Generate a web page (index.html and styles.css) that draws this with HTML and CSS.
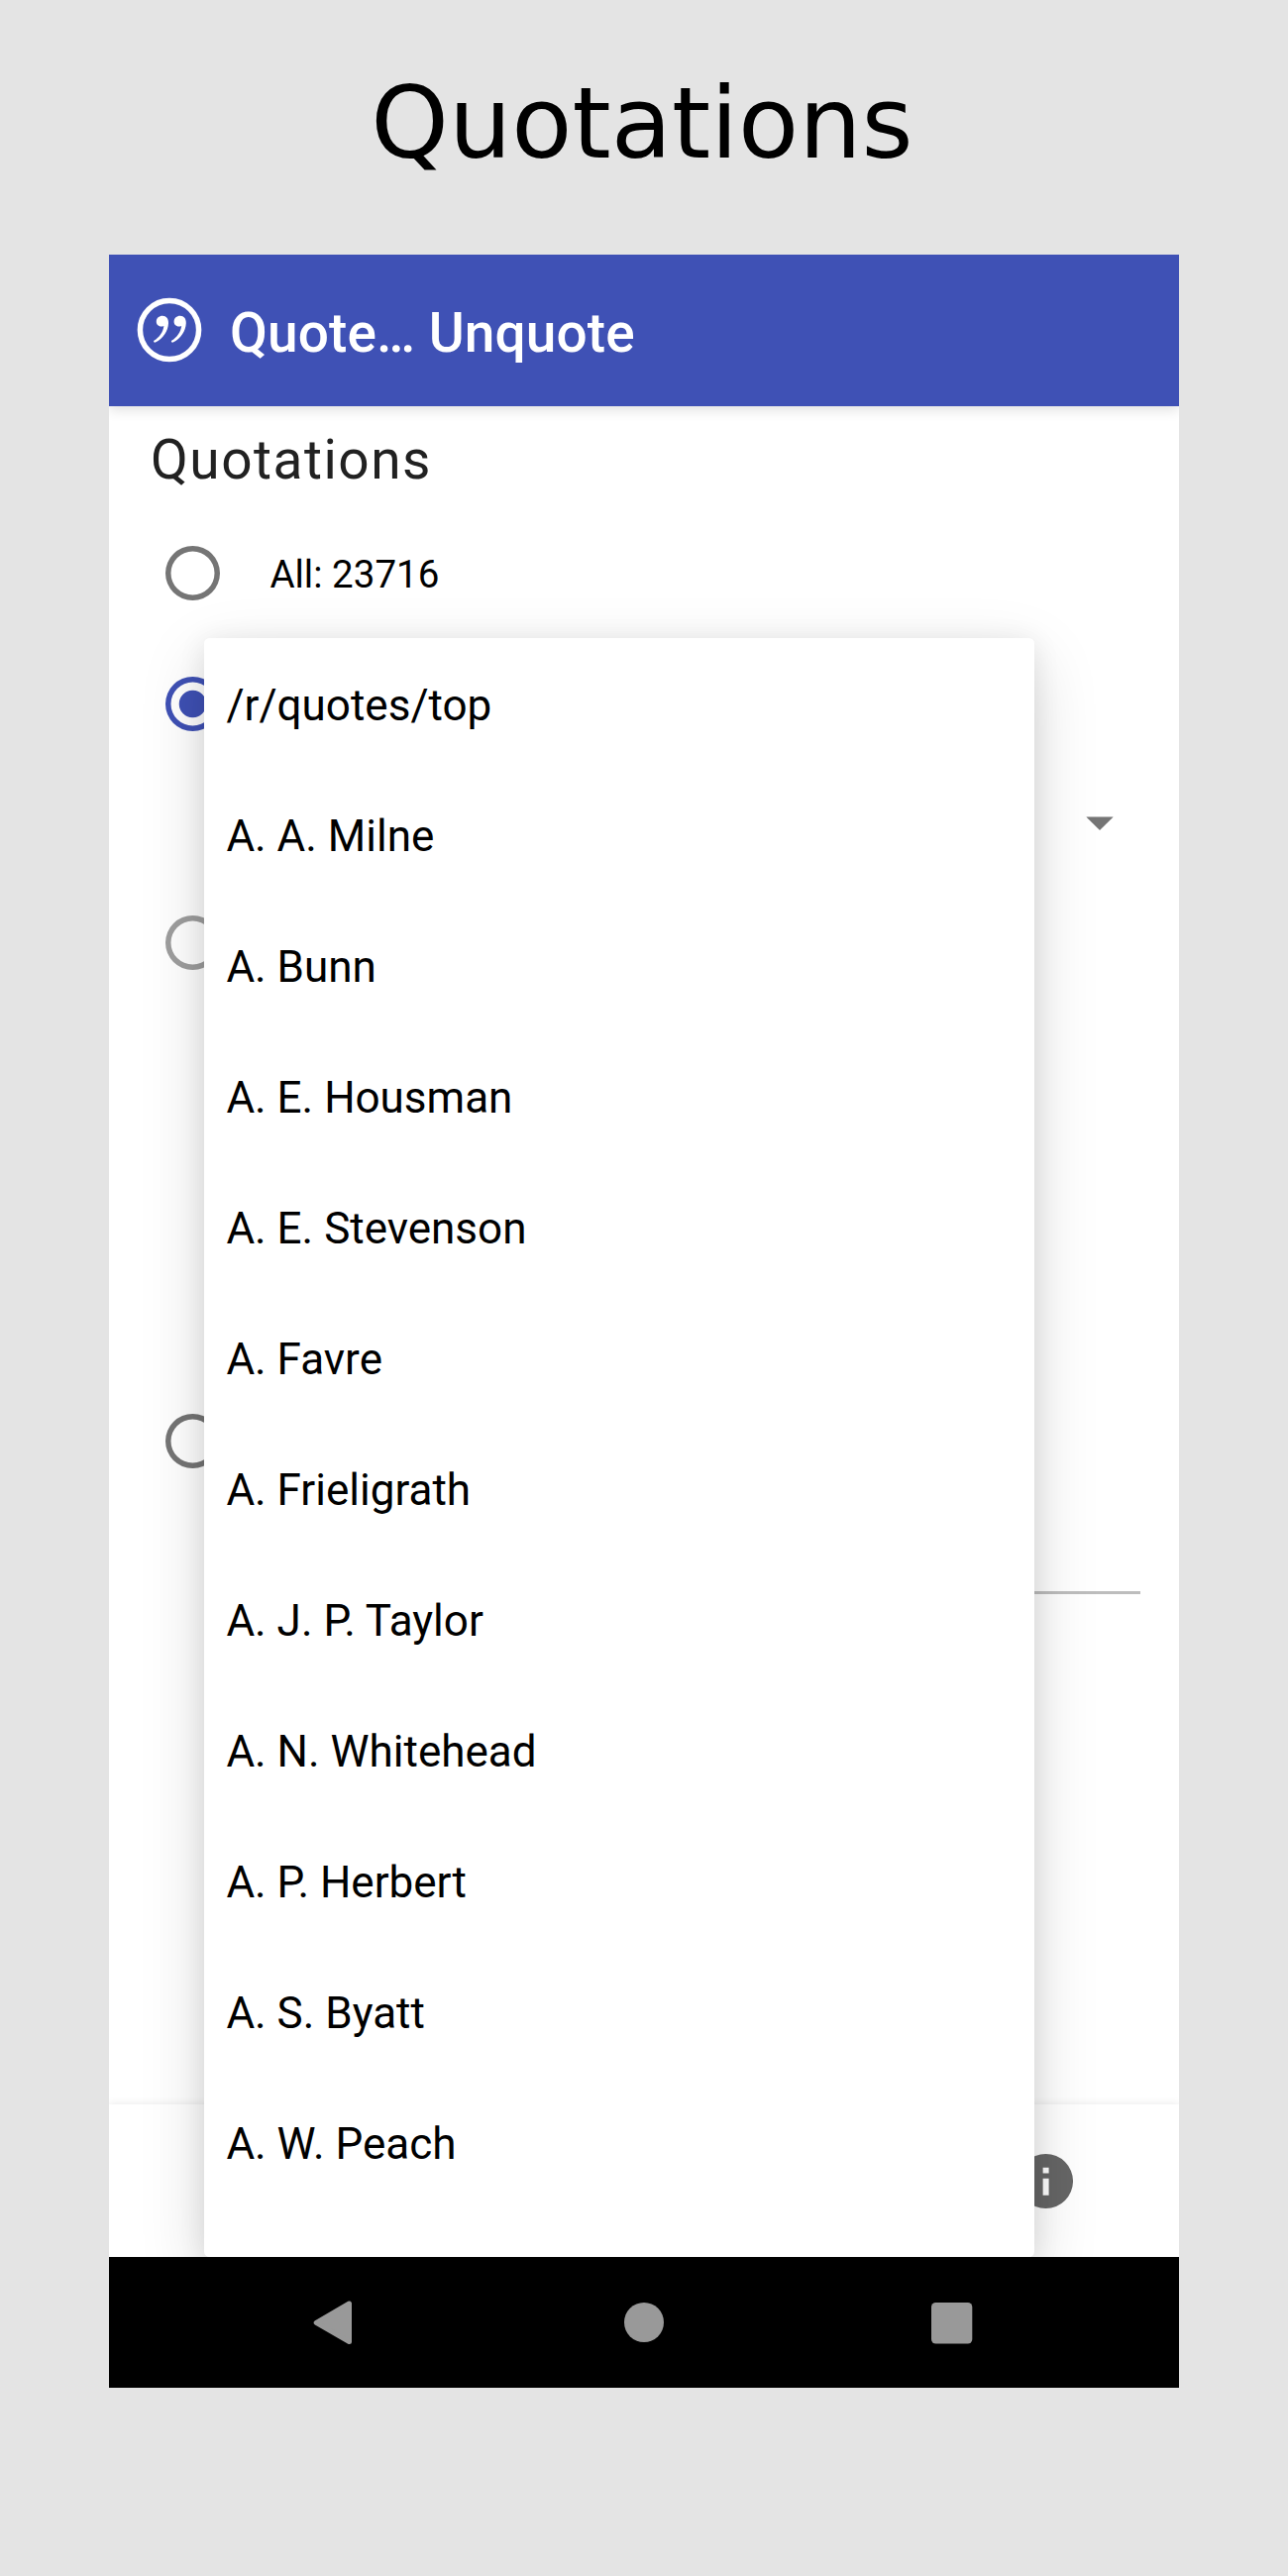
FILE: index.html
```html
<!DOCTYPE html>
<html lang="en">
<head>
<meta charset="utf-8">
<title>Quotations</title>
<link rel="stylesheet" href="styles.css">
</head>
<body>
<h1 class="page-title">Quotations</h1>
<div class="phone">
  <header class="app-bar">
    <svg class="app-logo" width="66" height="67" viewBox="0 0 66 67">
      <circle cx="33" cy="33" r="29.6" fill="none" stroke="#fff" stroke-width="5.5"/>
      <g fill="#fff">
        <path id="tick" d="M26 18.7C29.8 18.7 32.2 21.6 32 26.2C31.6 34.2 26.9 41.2 18.9 45.6C17.8 46.1 16.4 44.9 17.4 43.8C23.2 39.9 26.5 35.2 27.4 28.9C22.9 30.7 19.5 27.7 19.8 24.2C20 21 22.6 18.7 26 18.7Z"/>
        <use href="#tick" x="17.8"/>
      </g>
    </svg>
    <span class="app-name">Quote… Unquote</span>
  </header>
  <main class="content">
    <h2 class="heading">Quotations</h2>
    <div class="option"><span class="radio"></span><span class="label">All: 23716</span></div>
    <div class="option"><span class="radio checked"></span></div>
    <div class="spinner"><svg width="28" height="14" viewBox="0 0 28 14"><path d="M.3 .4H27.7L14 14Z" fill="#757575"/></svg></div>
    <div class="option"><span class="radio disabled"></span></div>
    <div class="gap"></div>
    <div class="option"><span class="radio"></span></div>
    <div class="field"></div>
    <footer class="bottom-bar">
      <svg width="55" height="55" viewBox="0 0 55 55"><path fill="#666" fill-rule="evenodd" d="M27.5 0a27.5 27.5 0 1 0 0 55a27.5 27.5 0 1 0 0-55ZM24.6 13.8h6v5.8h-6ZM24.6 24.8h6v17h-6Z"/></svg>
    </footer>
    <ul class="menu">
      <li>/r/quotes/top</li>
      <li>A. A. Milne</li>
      <li>A. Bunn</li>
      <li>A. E. Housman</li>
      <li>A. E. Stevenson</li>
      <li>A. Favre</li>
      <li>A. Frieligrath</li>
      <li>A. J. P. Taylor</li>
      <li>A. N. Whitehead</li>
      <li>A. P. Herbert</li>
      <li>A. S. Byatt</li>
      <li>A. W. Peach</li>
    </ul>
  </main>
  <nav class="nav-bar">
    <svg width="44" height="46" viewBox="0 0 44 46"><path d="M3.2 23.3L36.5 4V42.6Z" fill="#999" stroke="#999" stroke-width="5" stroke-linejoin="round"/></svg>
    <svg width="40" height="40" viewBox="0 0 40 40"><circle cx="20" cy="20" r="20" fill="#999"/></svg>
    <svg width="42" height="44" viewBox="0 0 42 44"><rect y="2" width="41.3" height="41.5" rx="4.5" fill="#999"/></svg>
  </nav>
</div>
</body>
</html>
```
FILE: styles.css
```css
* { box-sizing: border-box; }
body {
  margin: 0;
  height: 2600px;
  background: #e4e4e4;
  font-family: Roboto, sans-serif;
  color: #000;
}
.page-title {
  margin: 0;
  height: 257px;
  padding: 65px 4px 0 0;
  font: 400 100px/120px "DejaVu Sans", sans-serif;
  text-align: center;
}
.phone {
  width: 1080px;
  height: 2153px;
  margin: 0 auto;
  display: flex;
  flex-direction: column;
  background: #fff;
}
.app-bar {
  height: 153px;
  flex: none;
  display: flex;
  align-items: center;
  gap: 28px;
  padding-left: 28px;
  background: #3f51b5;
  color: #fff;
  z-index: 1;
  box-shadow: 0 4px 12px rgba(0, 0, 0, .12);
  clip-path: inset(0 0 -30px 0);
}
.app-name {
  font-size: 55px;
  font-weight: 500;
  line-height: 64px;
  letter-spacing: .1px;
  padding-top: 5px;
}
.content {
  position: relative;
  flex: 1;
  overflow: hidden;
  display: flex;
  flex-direction: column;
}
.heading {
  margin: 0;
  height: 102px;
  padding: 22px 0 0 42px;
  font-size: 55px;
  font-weight: 400;
  line-height: 64px;
  letter-spacing: 1.5px;
  color: #212121;
}
.option {
  height: 132px;
  flex: none;
  display: flex;
  align-items: center;
  gap: 50px;
  padding-left: 57.4px;
}
.radio {
  width: 55px;
  height: 55px;
  flex: none;
  border-radius: 50%;
  box-shadow: inset 0 0 0 5.5px #757575;
}
.checked {
  box-shadow: inset 0 0 0 5.5px #3f51b5;
  background: radial-gradient(circle, #3f51b5 13.3px, transparent 14.2px);
}
.disabled { box-shadow: inset 0 0 0 5.5px #9e9e9e; }
.label {
  font-size: 38.5px;
  line-height: 46px;
  padding-top: 3px;
}
.spinner {
  height: 109px;
  display: flex;
  align-items: center;
  justify-content: flex-end;
  padding-right: 66px;
}
.gap { height: 371px; }
.field {
  height: 89px;
  margin: 0 39px 0 160px;
  border-bottom: 3px solid #bdbdbd;
}
.bottom-bar {
  height: 154px;
  margin-top: auto;
  display: flex;
  align-items: center;
  justify-content: flex-end;
  padding-right: 107.5px;
  background: #fff;
  box-shadow: 0 0 8px rgba(0, 0, 0, .1);
}
.menu {
  position: absolute;
  left: 96px;
  top: 234px;
  width: 838px;
  height: 1634px;
  margin: 0;
  padding: 0 22.4px;
  list-style: none;
  background: #fff;
  border-radius: 5.5px;
  box-shadow: 0 22px 66px rgba(0, 0, 0, .15), 0 4px 28px rgba(0, 0, 0, .09);
}
.menu li {
  font-size: 44px;
  line-height: 136px;
  height: 132px;
}
.nav-bar {
  height: 132px;
  flex: none;
  display: flex;
  align-items: center;
  justify-content: space-between;
  padding: 0 208px 0 206px;
  background: #000;
}
```
